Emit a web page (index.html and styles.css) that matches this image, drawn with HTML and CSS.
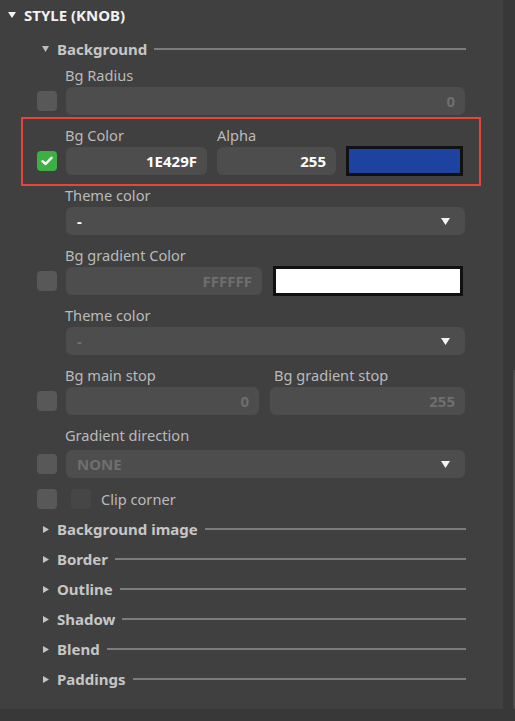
FILE: index.html
```html
<!DOCTYPE html>
<html>
<head>
<meta charset="utf-8">
<link rel="stylesheet" href="styles.css">
</head>
<body>
<div class="frame">
  <div class="panel">
    <div class="head">
      <svg class="tri" width="8" height="6" viewBox="0 0 8 6"><polygon points="0,0 8,0 4,6" fill="#f2f2f2"/></svg>
      <span>STYLE (KNOB)</span>
    </div>

    <div class="sub">
      <svg class="tri" width="7" height="6" viewBox="0 0 7 6"><polygon points="0,0 7,0 3.5,6" fill="#bdbdbd"/></svg>
      <span class="sub-title">Background</span>
      <i class="rule"></i>
    </div>

    <div class="body">
      <div class="label first">Bg Radius</div>
      <div class="row">
        <span class="check"></span>
        <div class="input muted grow">0</div>
      </div>

      <div class="hl">
        <div class="labels">
          <span class="label w-color">Bg Color</span>
          <span class="label">Alpha</span>
        </div>
        <div class="row">
          <span class="check on">
            <svg width="12" height="10" viewBox="0 0 12 10"><polyline points="1.5,5.2 4.6,8 10.5,1.8" fill="none" stroke="#fff" stroke-width="2.4" stroke-linecap="round" stroke-linejoin="round"/></svg>
          </span>
          <div class="input w-hex">1E429F</div>
          <div class="input w-alpha">255</div>
          <div class="swatch w-sw1" style="background:#1e429f"></div>
        </div>
      </div>

      <div class="label after-hl">Theme color</div>
      <div class="row indent">
        <div class="select grow"><span>-</span>
          <svg width="9" height="7" viewBox="0 0 9 7"><polygon points="0,0 9,0 4.5,7" fill="#f2f2f2"/></svg>
        </div>
      </div>

      <div class="label">Bg gradient Color</div>
      <div class="row">
        <span class="check"></span>
        <div class="input muted w-grad">FFFFFF</div>
        <div class="swatch w-sw2" style="background:#ffffff"></div>
      </div>

      <div class="label">Theme color</div>
      <div class="row indent">
        <div class="select grow"><span class="muted">-</span>
          <svg width="9" height="7" viewBox="0 0 9 7"><polygon points="0,0 9,0 4.5,7" fill="#f2f2f2"/></svg>
        </div>
      </div>

      <div class="labels pair-labels">
        <span class="label w-stop">Bg main stop</span>
        <span class="label">Bg gradient stop</span>
      </div>
      <div class="row">
        <span class="check"></span>
        <div class="input muted w-stop1">0</div>
        <div class="input muted grow">255</div>
      </div>

      <div class="label">Gradient direction</div>
      <div class="row row-dir">
        <span class="check"></span>
        <div class="select grow"><span class="muted">NONE</span>
          <svg width="9" height="7" viewBox="0 0 9 7"><polygon points="0,0 9,0 4.5,7" fill="#f2f2f2"/></svg>
        </div>
      </div>

      <div class="clip">
        <span class="check"></span>
        <span class="check dark"></span>
        <span class="clip-text">Clip corner</span>
      </div>
    </div>

    <div class="collapsed">
      <div class="sub closed">
        <svg class="tri" width="6" height="7" viewBox="0 0 6 7"><polygon points="0,0 6,3.5 0,7" fill="#c4c4c4"/></svg>
        <span class="sub-title">Background image</span><i class="rule"></i>
      </div>
      <div class="sub closed">
        <svg class="tri" width="6" height="7" viewBox="0 0 6 7"><polygon points="0,0 6,3.5 0,7" fill="#c4c4c4"/></svg>
        <span class="sub-title">Border</span><i class="rule"></i>
      </div>
      <div class="sub closed">
        <svg class="tri" width="6" height="7" viewBox="0 0 6 7"><polygon points="0,0 6,3.5 0,7" fill="#c4c4c4"/></svg>
        <span class="sub-title">Outline</span><i class="rule"></i>
      </div>
      <div class="sub closed">
        <svg class="tri" width="6" height="7" viewBox="0 0 6 7"><polygon points="0,0 6,3.5 0,7" fill="#c4c4c4"/></svg>
        <span class="sub-title">Shadow</span><i class="rule"></i>
      </div>
      <div class="sub closed">
        <svg class="tri" width="6" height="7" viewBox="0 0 6 7"><polygon points="0,0 6,3.5 0,7" fill="#c4c4c4"/></svg>
        <span class="sub-title">Blend</span><i class="rule"></i>
      </div>
      <div class="sub closed">
        <svg class="tri" width="6" height="7" viewBox="0 0 6 7"><polygon points="0,0 6,3.5 0,7" fill="#c4c4c4"/></svg>
        <span class="sub-title">Paddings</span><i class="rule"></i>
      </div>
    </div>
  </div>
  <div class="track"><div class="thumb"></div></div>
</div>
</body>
</html>
```

FILE: styles.css
```css
* { box-sizing: border-box; }

html, body {
  margin: 0;
  padding: 0;
  background: #383838;
  width: 515px;
  height: 721px;
  overflow: hidden;
  font-family: "Noto Sans", "Open Sans", sans-serif;
  font-size: 14.6px;
}

.frame {
  display: flex;
  width: 515px;
  height: 709px;
}

.panel {
  width: 503px;
  height: 709px;
  background: #404040;
}

.track {
  width: 12px;
  height: 709px;
  display: flex;
  justify-content: flex-end;
}

.thumb {
  width: 2px;
  height: 339px;
  margin-top: 370px;
  background: #4a4a4a;
}

.head {
  height: 30px;
  display: flex;
  align-items: center;
  gap: 8px;
  padding-left: 8px;
  color: #f2f2f2;
  font-weight: 700;
  font-size: 15px;
}

.head .tri { margin-top: -1px; }

.sub {
  height: 30px;
  display: flex;
  align-items: center;
  padding-left: 42px;
  padding-right: 37px;
  margin-top: 4px;
}

.sub .tri { flex: none; margin-right: 8px; }

.sub.closed { margin-top: 0; padding-left: 43px; }
.sub.closed .tri { margin-right: 8px; }

.sub-title {
  color: #c6c6c6;
  font-weight: 700;
  font-size: 15px;
  white-space: nowrap;
}

.rule {
  flex: 1;
  height: 2px;
  background: #7c7c7c;
  margin-left: 7px;
}

.body {
  padding: 0 38px 0 37px;
}

.label {
  display: block;
  height: 18px;
  line-height: 18px;
  margin-top: 11px;
  padding-left: 28px;
  color: #bababa;
  font-size: 14.6px;
  white-space: nowrap;
}

.label.first { margin-top: 2px; }
.label.after-hl { margin-top: 0; }

.labels {
  display: flex;
  margin-top: 0;
}

.labels .label { margin-top: 0; }
.labels .label + .label { padding-left: 0; }

.pair-labels { margin-top: 11px; }

.w-color { width: 180px; }
.w-stop { width: 237px; }

.row {
  display: flex;
  align-items: center;
  gap: 9px;
  height: 28px;
  margin-top: 3px;
}

.row.indent { padding-left: 29px; }

.row-dir { margin-top: 6px; }

.check {
  flex: none;
  width: 20px;
  height: 20px;
  border-radius: 4px;
  background: #585858;
  display: flex;
  align-items: center;
  justify-content: center;
}

.check.on { background: #3cb043; }
.check.dark { background: #464646; }

.input {
  height: 28px;
  border-radius: 6px;
  background: #4d4d4d;
  color: #ffffff;
  font-weight: 700;
  font-size: 15px;
  line-height: 28px;
  text-align: right;
  padding-right: 10px;
  flex: none;
}

.grow { flex: 1; }

.muted { color: #6f6f6f; }

.w-hex { width: 141px; }
.w-alpha { width: 119px; margin-left: 1px; }
.w-sw1 { width: 117px; margin-left: 1px; }
.w-grad { width: 196px; }
.w-sw2 { width: 190px; margin-left: 2px; }
.w-stop1 { width: 193px; }
.w-stop1 + .input { margin-left: 2px; }

.swatch {
  flex: none;
  height: 30px;
  border: 3px solid #111111;
}

.hl {
  margin: 2px -16px 0 -16px;
  border: 2px solid #e5453b;
  padding: 7px 14px 9px 14px;
}

.select {
  height: 28px;
  border-radius: 6px;
  background: #4d4d4d;
  display: flex;
  align-items: center;
  justify-content: space-between;
  padding: 0 15px 0 11px;
  color: #ffffff;
  font-weight: 700;
  font-size: 15px;
}

.select svg { flex: none; }

.clip {
  display: flex;
  align-items: center;
  height: 22px;
  margin-top: 10px;
}

.clip .check.dark { margin-left: 14px; }

.clip-text {
  margin-left: 10px;
  color: #bababa;
  font-size: 14.6px;
}

.collapsed { margin-top: 4px; }
```
